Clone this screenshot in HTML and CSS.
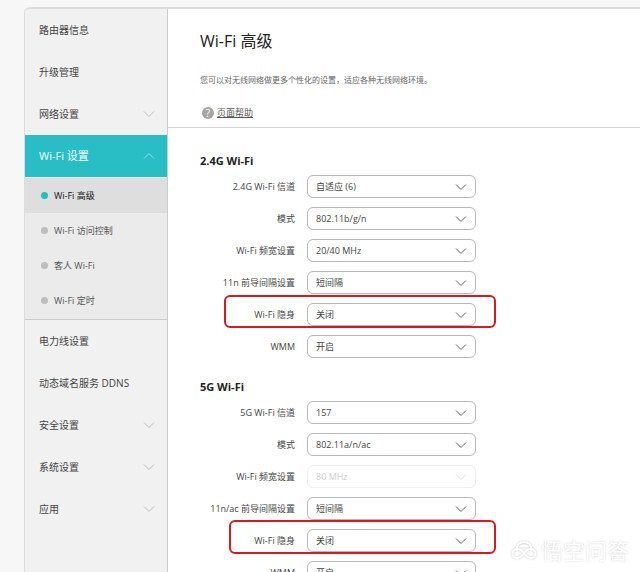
FILE: index.html
```html
<!doctype html>
<html lang="zh-CN">
<head>
    <meta charset="UTF-8">
    <meta name="viewport" content="width=device-width, initial-scale=1.0">
    <title>Wi-Fi 高级</title>
    <link rel="stylesheet" href="styles.css">
</head>
<body>
    <svg class="defs" aria-hidden="true">
        <symbol id="down" viewBox="0 0 12 8"><path d="M1 1.5 6 6.5 11 1.5"/></symbol>
        <symbol id="up" viewBox="0 0 12 8"><path d="M1 6.5 6 1.5 11 6.5"/></symbol>
    </svg>
    <div class="frame">
        <nav class="side">
            <ul class="menu">
                <li><a href="#">路由器信息</a></li>
                <li><a href="#">升级管理</a></li>
                <li><a href="#">网络设置<svg class="arrow"><use href="#down"/></svg></a></li>
                <li>
                    <a class="on" href="#">Wi-Fi 设置<svg class="arrow"><use href="#up"/></svg></a>
                    <ul class="sub">
                        <li><a class="cur" href="#">Wi-Fi 高级</a></li>
                        <li><a href="#">Wi-Fi 访问控制</a></li>
                        <li><a href="#">客人 Wi-Fi</a></li>
                        <li><a href="#">Wi-Fi 定时</a></li>
                    </ul>
                </li>
                <li><a href="#">电力线设置</a></li>
                <li><a href="#">动态域名服务 DDNS</a></li>
                <li><a href="#">安全设置<svg class="arrow"><use href="#down"/></svg></a></li>
                <li><a href="#">系统设置<svg class="arrow"><use href="#down"/></svg></a></li>
                <li><a href="#">应用<svg class="arrow"><use href="#down"/></svg></a></li>
            </ul>
        </nav>
        <main class="main">
            <header class="head">
                <h1>Wi-Fi 高级</h1>
                <p>您可以对无线网络做更多个性化的设置，适应各种无线网络环境。</p>
                <div class="help"><span class="mark">?</span><a href="#">页面帮助</a></div>
            </header>
            <form class="form">
                <section class="group">
                    <h2>2.4G Wi-Fi</h2>
                    <div class="row">
                        <label for="ch24">2.4G Wi-Fi 信道</label>
                        <div class="pick"><select id="ch24"><option>自适应 (6)</option></select><svg class="arrow"><use href="#down"/></svg></div>
                    </div>
                    <div class="row">
                        <label for="mode24">模式</label>
                        <div class="pick"><select id="mode24"><option>802.11b/g/n</option></select><svg class="arrow"><use href="#down"/></svg></div>
                    </div>
                    <div class="row">
                        <label for="bw24">Wi-Fi 频宽设置</label>
                        <div class="pick"><select id="bw24"><option>20/40 MHz</option></select><svg class="arrow"><use href="#down"/></svg></div>
                    </div>
                    <div class="row">
                        <label for="gi24">11n 前导间隔设置</label>
                        <div class="pick"><select id="gi24"><option>短间隔</option></select><svg class="arrow"><use href="#down"/></svg></div>
                    </div>
                    <div class="row note">
                        <label for="hide24">Wi-Fi 隐身</label>
                        <div class="pick"><select id="hide24"><option>关闭</option></select><svg class="arrow"><use href="#down"/></svg></div>
                    </div>
                    <div class="row">
                        <label for="wmm24">WMM</label>
                        <div class="pick"><select id="wmm24"><option>开启</option></select><svg class="arrow"><use href="#down"/></svg></div>
                    </div>
                </section>
                <section class="group">
                    <h2>5G Wi-Fi</h2>
                    <div class="row">
                        <label for="ch5">5G Wi-Fi 信道</label>
                        <div class="pick"><select id="ch5"><option>157</option></select><svg class="arrow"><use href="#down"/></svg></div>
                    </div>
                    <div class="row">
                        <label for="mode5">模式</label>
                        <div class="pick"><select id="mode5"><option>802.11a/n/ac</option></select><svg class="arrow"><use href="#down"/></svg></div>
                    </div>
                    <div class="row">
                        <label for="bw5">Wi-Fi 频宽设置</label>
                        <div class="pick off"><select id="bw5" disabled><option>80 MHz</option></select><svg class="arrow"><use href="#down"/></svg></div>
                    </div>
                    <div class="row">
                        <label for="gi5">11n/ac 前导间隔设置</label>
                        <div class="pick"><select id="gi5"><option>短间隔</option></select><svg class="arrow"><use href="#down"/></svg></div>
                    </div>
                    <div class="row note tall">
                        <label for="hide5">Wi-Fi 隐身</label>
                        <div class="pick"><select id="hide5"><option>关闭</option></select><svg class="arrow"><use href="#down"/></svg></div>
                    </div>
                    <div class="row">
                        <label for="wmm5">WMM</label>
                        <div class="pick"><select id="wmm5"><option>开启</option></select><svg class="arrow"><use href="#down"/></svg></div>
                    </div>
                </section>
            </form>
        </main>
    </div>
    <div class="brand">
        <svg viewBox="0 0 26 20">
            <path d="M6 11C5 5 8 2 13 2s8 3 7 9"/>
            <path d="M13 13C10 9 8 9 6 9a4 4 0 0 0 0 9c3 0 5-2 7-5 2-3 4-4 7-4a4 4 0 0 1 0 9c-3 0-5-2-7-5"/>
            <path d="M9 7c2-2 6-2 8 0"/>
        </svg>
        <span>悟空问答</span>
    </div>
</body>
</html>
```

FILE: styles.css
```css
*{
    margin: 0;
    padding: 0;
    box-sizing: border-box;
    list-style: none;
}
html,body{
    height: 100%;
    overflow: hidden;
}
body{
    display: flex;
    padding: 7px 0 0 24px;
    background: #f7f7f7;
    color: #444;
    font: 9px/16px "Open Sans","Noto Sans CJK SC",sans-serif;
}
a{
    color: inherit;
    text-decoration: none;
}
.defs{
    position: absolute;
    width: 0;
    height: 0;
}
.frame{
    flex: 1;
    display: flex;
    border: solid #dcdcdc;
    border-width: 2px 0 0 1px;
    border-radius: 6px 0 0 0;
    background: #fff;
    overflow: hidden;
}
.side{
    flex: none;
    width: 143px;
    background: #f1f1f1;
    border-right: 1px solid #ccc;
}
.menu a{
    display: flex;
    align-items: center;
    justify-content: space-between;
    height: 42px;
    padding: 0 12px 0 14px;
    font-size: 10px;
}
.arrow{
    flex: none;
    width: 12px;
    height: 8px;
    fill: none;
    stroke: #bbb;
}
.menu .on{
    background: #29bec6;
    color: #fff;
    font-size: 11px;
}
.on .arrow{
    stroke: #8fe0e4;
}
.sub{
    padding: 1px 0;
    background: #ebebeb;
    border-bottom: 1px solid #ccc;
}
.sub a{
    justify-content: flex-start;
    gap: 6px;
    height: 35px;
    padding-left: 16px;
    font-size: 9px;
    color: #555;
}
.sub a::before{
    content: "";
    width: 7px;
    height: 7px;
    border-radius: 50%;
    background: #bdbdbd;
}
.sub .cur{
    background: #dedede;
    color: #111;
}
.sub .cur::before{
    background: #1fbfc2;
}
.main{
    flex: 1;
    min-width: 0;
}
.head{
    height: 119px;
    padding: 20px 32px 0;
    border-bottom: 1px solid #d5d5d5;
}
h1{
    font-size: 16px;
    line-height: 24px;
    font-weight: 400;
    color: #222;
}
.head p{
    margin-top: 19px;
    font-size: 8px;
    color: #666;
}
.help{
    display: flex;
    align-items: center;
    gap: 3px;
    margin-top: 17px;
    padding-left: 2px;
}
.help a{
    text-decoration: underline;
    color: #555;
}
.mark{
    width: 12px;
    height: 12px;
    border-radius: 50%;
    background: #a5a5a5;
    color: #fff;
    font-size: 10px;
    line-height: 12px;
    text-align: center;
}
.form{
    padding: 25px 32px;
}
.group{
    display: flex;
    flex-direction: column;
    gap: 9px;
    width: 276px;
    margin-bottom: 21px;
}
h2{
    font-size: 11px;
    line-height: 16px;
    margin-bottom: -3px;
    color: #222;
}
.row{
    position: relative;
    display: flex;
    align-items: center;
    justify-content: flex-end;
    gap: 12px;
}
.pick{
    display: flex;
    align-items: center;
    width: 169px;
    height: 23px;
    padding-right: 8px;
    border: 1px solid #b5b9bb;
    border-radius: 6px;
}
.pick select{
    flex: 1;
    align-self: stretch;
    margin-right: -12px;
    padding: 0 12px 0 8px;
    appearance: none;
    border: 0;
    background: none;
    color: #444;
    font: inherit;
}
.pick .arrow{
    stroke: #666;
    pointer-events: none;
}
.off{
    border-color: #eee;
}
.pick select:disabled{
    color: #ccc;
    opacity: 1;
}
.off .arrow{
    stroke: #ddd;
}
/* red outline round the row */
.note::after{
    content: "";
    position: absolute;
    top: -8px;
    right: -20px;
    bottom: -2px;
    left: 24px;
    border: 2px solid #d9191f;
    border-radius: 6px;
    pointer-events: none;
}
.tall::after{
    top: -9px;
    left: 29px;
}
.brand{
    position: fixed;
    right: 11px;
    bottom: 10px;
    display: flex;
    align-items: center;
    gap: 4px;
    color: #fff;
    font-size: 22px;
    line-height: 24px;
    text-shadow: 0 0 2px #ccc;
}
.brand svg{
    width: 26px;
    height: 20px;
    fill: none;
    stroke: #fff;
    stroke-width: 2;
    filter: drop-shadow(0 0 1px #ccc);
}
```
